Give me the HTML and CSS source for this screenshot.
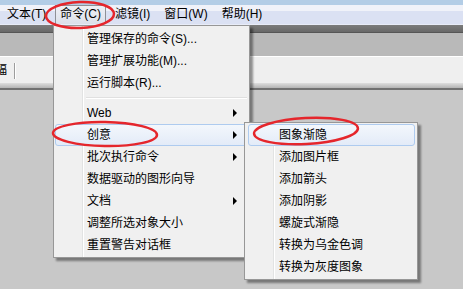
FILE: index.html
```html
<!DOCTYPE html>
<html lang="zh-CN">
<head>
    <meta charset="UTF-8">
    <meta name="viewport" content="width=device-width, initial-scale=1.0">
    <title>命令菜单</title>
    <link rel="stylesheet" href="styles.css">
</head>
<body>
    <div class="app">
        <div class="menubar">
            <span class="mb-item">文本(T)</span>
            <span class="mb-item open">命令(C)</span>
            <span class="mb-item">滤镜(I)</span>
            <span class="mb-item">窗口(W)</span>
            <span class="mb-item">帮助(H)</span>
        </div>
        <div class="dock"></div>
        <div class="toolbar">
            <span class="tb-label">幅</span>
            <span class="tb-sep"></span>
        </div>
        <div class="workspace"></div>

        <ul class="menu main-menu">
            <li>管理保存的命令(S)...</li>
            <li>管理扩展功能(M)...</li>
            <li>运行脚本(R)...</li>
            <li class="sep"></li>
            <li class="has-sub">Web</li>
            <li class="has-sub active">创意</li>
            <li class="has-sub">批次执行命令</li>
            <li>数据驱动的图形向导</li>
            <li class="has-sub">文档</li>
            <li>调整所选对象大小</li>
            <li>重置警告对话框</li>
        </ul>

        <ul class="menu sub-menu">
            <li class="active">图象渐隐</li>
            <li>添加图片框</li>
            <li>添加箭头</li>
            <li>添加阴影</li>
            <li>螺旋式渐隐</li>
            <li>转换为乌金色调</li>
            <li>转换为灰度图象</li>
        </ul>

        <svg class="marks" width="463" height="289" viewBox="0 0 463 289">
            <ellipse cx="80" cy="15" rx="34" ry="13" transform="rotate(-2 80 15)"/>
            <ellipse cx="105" cy="134" rx="52" ry="12" transform="rotate(1 105 134)"/>
            <ellipse cx="306" cy="131" rx="52" ry="13" transform="rotate(-3 306 131)"/>
        </svg>
    </div>
</body>
</html>
```

FILE: styles.css
```css
body {
    margin: 0;
    font-family: "Liberation Sans", "Noto Sans CJK SC", sans-serif;
    font-size: 12px;
    color: #000000;
    overflow: hidden;
}
.app {
    position: relative;
    width: 463px;
    height: 289px;
    display: flex;
    flex-direction: column;
    background-color: #c8c8c8;
}
.menubar {
    height: 24px;
    border-bottom: 1px solid #e8ecf8;
    background: linear-gradient(#b3cde6 0, #b3cde6 5px, #f0f2f9 5px, #f0f2f9 11px, #dbe1f3 11px);
    display: flex;
    align-items: flex-end;
    padding-left: 2px;
    gap: 4px;
}
.mb-item {
    height: 17px;
    line-height: 17px;
    padding: 0 5px 1px 5px;
    white-space: nowrap;
}
.mb-item.open {
    height: 17px;
    border: 1px solid #8e9096;
    border-bottom: none;
    padding: 0 4px 1px 4px;
    background: linear-gradient(#eef0f6, #dcdfe9);
}
.dock {
    height: 31px;
    border-bottom: 1px solid #ffffff;
    background: linear-gradient(#7c7c7c 0, #686868 7px, #565656 7px, #565656 8px, #b9b9b9 8px);
}
.toolbar {
    height: 33px;
    display: flex;
    align-items: flex-start;
    gap: 7px;
    background: linear-gradient(#efefef 0, #efefef 26px, #dedede 26px, #b4b4b4 31px, #717171 31px);
}
.tb-label {
    margin-left: -5px;
    line-height: 26px;
}
.tb-sep {
    width: 1px;
    height: 16px;
    margin-top: 6px;
    background-color: #9c9c9c;
    border-right: 1px solid #ffffff;
}
.workspace {
    flex: 1;
}
.menu {
    position: absolute;
    margin: 0;
    list-style-type: none;
    box-sizing: border-box;
    border: 1px solid #979797;
    background-color: #f0f0f0;
    background-image: linear-gradient(to right, transparent 28px, #e2e3e3 28px, #e2e3e3 29px, #ffffff 29px, #ffffff 30px, transparent 30px);
    box-shadow: 3px 3px 2px rgba(0, 0, 0, 0.4);
}
.menu li {
    position: relative;
    height: 22px;
    line-height: 22px;
    white-space: nowrap;
    box-sizing: border-box;
}
.menu li.active {
    border: 1px solid #aecbef;
    border-radius: 3px;
    line-height: 20px;
    background: linear-gradient(#f3f7fc, #e3ebf8);
}
.main-menu {
    left: 53px;
    top: 25px;
    width: 197px;
    padding: 2px 0 1px 0;
}
.main-menu li {
    margin: 0 2px 0 1px;
    padding-left: 32px;
}
.main-menu li.active {
    padding-left: 31px;
}
.main-menu li.sep {
    height: 8px;
    margin-left: 32px;
    padding: 0;
}
.main-menu li.sep::before {
    content: "";
    position: absolute;
    left: 0;
    right: 0;
    top: 3px;
    height: 1px;
    background-color: #e0e0e0;
    border-bottom: 1px solid #ffffff;
}
.has-sub::after {
    content: "";
    position: absolute;
    right: 10px;
    top: 7px;
    border-left: 4px solid #000000;
    border-top: 4px solid transparent;
    border-bottom: 4px solid transparent;
}
.has-sub.active::after {
    top: 6px;
    right: 9px;
}
.sub-menu {
    left: 244px;
    top: 122px;
    width: 174px;
    padding: 1px 0;
}
.sub-menu li {
    margin: 0 2px 0 3px;
    padding-left: 31px;
}
.sub-menu li.active {
    padding-left: 30px;
}
.marks {
    position: absolute;
    left: 0;
    top: 0;
    pointer-events: none;
}
.marks ellipse {
    fill: none;
    stroke: #e5262c;
    stroke-width: 2.5;
}
```
